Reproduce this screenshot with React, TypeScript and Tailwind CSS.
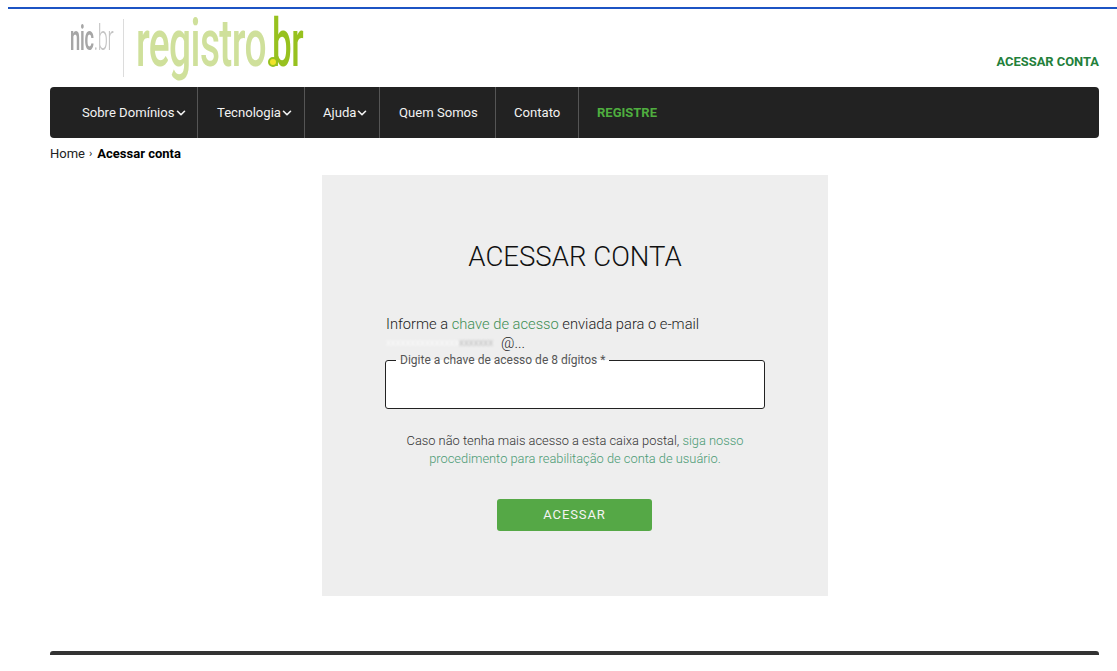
import { ChevronDown } from 'lucide-react';

const menu = [
  { label: 'Sobre Domínios', hasMenu: true, className: 'pl-[32px] w-[148px]' },
  { label: 'Tecnologia', hasMenu: true, className: 'pl-[19px] w-[107px]' },
  { label: 'Ajuda', hasMenu: true, className: 'pl-[18px] w-[75px]' },
  { label: 'Quem Somos', hasMenu: false, className: 'pl-[19px] w-[116px]' },
  { label: 'Contato', hasMenu: false, className: 'pl-[18px] w-[83px]' },
];

function Logo() {
  return (
    <div className="flex h-[58px] w-[260px] items-start">
      <div className="flex h-[58px] w-[48px] shrink-0 justify-end pt-[1px]">
        <span className="origin-right scale-x-[0.52] whitespace-nowrap text-[35px] leading-[38px] tracking-[-0.5px]">
          <span className="font-semibold text-[#a6a6a6]">nic</span>
          <span className="font-light text-[#c4c4c4]">.br</span>
        </span>
      </div>
      <div className="ml-[10px] h-[58px] w-px shrink-0 bg-[#dcdcdc]" />
      <div className="relative ml-[12px] h-[58px] w-[170px] shrink-0">
        <span className="absolute left-0 top-[-20px] origin-left scale-x-[0.59] whitespace-nowrap text-[66px] font-medium leading-[90px] tracking-[-1px] text-[#cfe09b]">
          registro
        </span>
        <span className="absolute left-[136px] top-[-20px] origin-left scale-x-[0.53] whitespace-nowrap text-[66px] font-medium leading-[90px] tracking-[-1px] text-[#97c11f]">
          br
        </span>
        <span className="absolute left-[132px] top-[38px] h-[10px] w-[10px] rounded-full border-[2px] border-[#97c11f] bg-[#f1e42a]" />
      </div>
    </div>
  );
}

export default function App() {
  return (
    <div className="min-h-[671px] bg-white pl-[8px] pt-[7px] font-['Roboto',sans-serif] text-black">
      <div className="h-[2px] bg-[#1c54c4]" />

      <div className="ml-[42px] w-[1049px]">
        <header className="flex h-[78px] items-start justify-between">
          <div className="pl-[15px] pt-[10px]">
            <Logo />
          </div>
          <a className="mt-[44px] text-[12.9px] font-bold leading-[17px] text-[#23803a]">ACESSAR CONTA</a>
        </header>

        <nav className="flex h-[51px] items-stretch rounded-[4px] bg-[#222222] text-[13.1px] text-[#f2f2f2]">
          {menu.map((item) => (
            <div key={item.label} className={`flex items-center border-r border-[#555555] ${item.className}`}>
              <span className="whitespace-nowrap">{item.label}</span>
              {item.hasMenu && <ChevronDown size={14} strokeWidth={2.8} className="-ml-[1px] shrink-0" />}
            </div>
          ))}
          <div className="flex items-center pl-[18px] text-[13px] font-bold text-[#4fae3f]">REGISTRE</div>
        </nav>

        <div className="mt-[8px] flex h-[16px] items-center text-[13px] leading-[16px] text-[#222222]">
          <span>Home</span>
          <span className="ml-[4px] mr-[5px] text-[11px]">›</span>
          <span className="font-bold text-black">Acessar conta</span>
        </div>

        <main className="ml-[272px] mt-[13px] flex h-[421px] w-[506px] flex-col bg-[#eeeeee] px-[63px]">
          <h1 className="mt-[65px] text-center text-[27.6px] font-light leading-[34px] text-[#111111]">ACESSAR CONTA</h1>

          <p className="ml-[1px] mt-[40px] text-[14.7px] font-light leading-[20px] text-[#222222]">
            Informe a <span className="text-[#3f8f55]">chave de acesso</span> enviada para o e-mail
          </p>
          <div className="ml-[1px] flex h-[19px] items-start text-[14.7px] font-light leading-[19px] text-[#222222]">
            <span className="mt-[3px] whitespace-nowrap text-[10px] leading-[12px] text-white blur-[1px]">xxxxxxxxxxxxxxx</span>
            <span className="mt-[3px] whitespace-nowrap text-[10px] leading-[12px] text-[#aaaaaa] blur-[1px]">xxxxxxx</span>
            <span className="ml-[8px]">@...</span>
          </div>

          <fieldset className="h-[56px] w-[380px] rounded-[3px] border border-[#222222] bg-white pl-[10px]">
            <legend className="px-[4px] text-[12px] leading-[14px] text-[#555555]">Digite a chave de acesso de 8 dígitos *</legend>
          </fieldset>

          <p className="mt-[23px] text-center text-[12.85px] font-light leading-[17.5px] text-[#333333]">
            Caso não tenha mais acesso a esta caixa postal, <span className="text-[#4a9a74]">siga nosso</span>
            <br />
            <span className="text-[#4a9a74]">procedimento para reabilitação de conta de usuário.</span>
          </p>

          <button className="ml-[112px] mt-[32px] h-[32px] w-[155px] rounded-[3px] bg-[#55a846] text-[13px] tracking-[0.9px] text-[#f4f4f4]">
            ACESSAR
          </button>
        </main>

        <div className="mt-[55px] h-[4px] rounded-t-[3px] bg-[#333333]" />
      </div>
    </div>
  );
}
